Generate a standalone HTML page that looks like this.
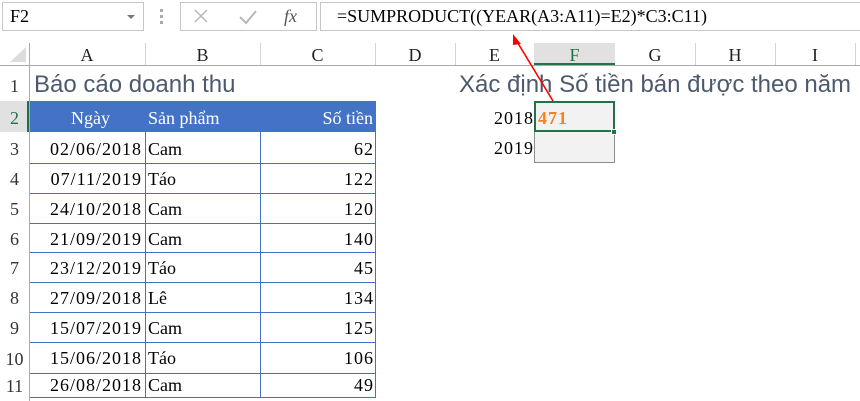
<!DOCTYPE html>
<html><head><meta charset="utf-8">
<style>
*{margin:0;padding:0;box-sizing:border-box}
body{width:860px;height:401px;background:#fff;position:relative;overflow:hidden;font-family:"Liberation Serif",serif;}
.a{position:absolute}
.s{font-family:"Liberation Serif",serif;font-size:18px;color:#000;white-space:nowrap;line-height:20px}
.n{letter-spacing:1px}
.hd{font-family:"Liberation Serif",serif;font-size:18px;color:#222;text-align:center;line-height:20px}
.vl{position:absolute;width:1px;background:#d4d4d4}
.hl{position:absolute;height:1px;background:#d4d4d4}
.bl{position:absolute;background:#4472c4}
.t{font-family:"Liberation Sans","DejaVu Sans",sans-serif;font-size:24px;color:#4d5a6e;white-space:nowrap}
</style></head><body>
<div class="a" style="left:2px;top:2px;width:142px;height:29px;border:1px solid #c6c6c6"></div>
<div class="a s" style="left:10px;top:6px">F2</div>
<div class="a" style="left:127px;top:15px;width:0;height:0;border-left:4px solid transparent;border-right:4px solid transparent;border-top:4px solid #777"></div>
<div class="a" style="left:160px;top:9px;width:3px;height:3px;background:#aaa"></div>
<div class="a" style="left:160px;top:15px;width:3px;height:3px;background:#aaa"></div>
<div class="a" style="left:160px;top:21px;width:3px;height:3px;background:#aaa"></div>
<div class="a" style="left:180px;top:2px;width:137px;height:29px;border:1px solid #c6c6c6"></div>
<svg class="a" style="left:190px;top:6px" width="120" height="22">
<path d="M5 4 L17 16 M17 4 L5 16" stroke="#b8b8b8" stroke-width="1.5"/>
<path d="M50 11 L56 17 L66 5" stroke="#b8b8b8" stroke-width="2" fill="none"/>
<text x="94" y="16" font-family="Liberation Serif" font-style="italic" font-size="18" fill="#555">fx</text>
</svg>
<div class="a" style="left:320px;top:2px;width:545px;height:29px;border:1px solid #c6c6c6"></div>
<div class="a s" style="left:337px;top:6px">=SUMPRODUCT((YEAR(A3:A11)=E2)*C3:C11)</div>

<div class="hl" style="left:0;top:65px;width:860px;background:#ababab"></div>
<div class="vl" style="left:29px;top:43px;height:358px;background:#ababab"></div>
<svg class="a" style="left:10px;top:47px" width="17" height="16"><path d="M16 0 L16 15 L0 15 Z" fill="#dcdcdc"/></svg>
<div class="vl" style="left:145px;top:43px;height:22px"></div>
<div class="vl" style="left:260px;top:43px;height:22px"></div>
<div class="vl" style="left:375px;top:43px;height:22px"></div>
<div class="vl" style="left:455px;top:43px;height:22px"></div>
<div class="vl" style="left:534px;top:43px;height:22px"></div>
<div class="a" style="left:534px;top:43px;width:81px;height:22px;background:#e1e1e1;border-bottom:2px solid #217346"></div>
<div class="vl" style="left:695px;top:43px;height:22px"></div>
<div class="vl" style="left:775px;top:43px;height:22px"></div>
<div class="vl" style="left:855px;top:43px;height:22px"></div>
<div class="a hd" style="left:29px;top:45px;width:116px">A</div>
<div class="a hd" style="left:145px;top:45px;width:115px">B</div>
<div class="a hd" style="left:260px;top:45px;width:115px">C</div>
<div class="a hd" style="left:375px;top:45px;width:80px">D</div>
<div class="a hd" style="left:455px;top:45px;width:79px">E</div>
<div class="a hd" style="left:534px;top:45px;width:81px;color:#217346">F</div>
<div class="a hd" style="left:615px;top:45px;width:80px">G</div>
<div class="a hd" style="left:695px;top:45px;width:80px">H</div>
<div class="a hd" style="left:775px;top:45px;width:80px">I</div>

<div class="a" style="left:0;top:101px;width:29px;height:31px;background:#e1e1e1;border-right:2px solid #217346"></div>
<div class="a hd" style="left:0;top:76px;width:29px;color:#333">1</div>
<div class="a hd" style="left:0;top:108px;width:29px;color:#217346">2</div>
<div class="a hd" style="left:0;top:139px;width:29px;color:#333">3</div>
<div class="a hd" style="left:0;top:169px;width:29px;color:#333">4</div>
<div class="a hd" style="left:0;top:199px;width:29px;color:#333">5</div>
<div class="a hd" style="left:0;top:229px;width:29px;color:#333">6</div>
<div class="a hd" style="left:0;top:258px;width:29px;color:#333">7</div>
<div class="a hd" style="left:0;top:288px;width:29px;color:#333">8</div>
<div class="a hd" style="left:0;top:318px;width:29px;color:#333">9</div>
<div class="a hd" style="left:0;top:349px;width:29px;color:#333">10</div>
<div class="a hd" style="left:0;top:376px;width:29px;color:#333">11</div>

<div class="a t" style="left:34px;top:71px">Báo cáo doanh thu</div>
<div class="a t" style="left:459px;top:71px">Xác định Số tiền bán được theo năm</div>

<div class="a" style="left:30px;top:101px;width:345px;height:31px;background:#4472c4"></div>
<div class="a s" style="left:30px;top:108px;width:80px;text-align:right;color:#fff">Ngày</div>
<div class="a s" style="left:148px;top:108px;color:#fff">Sản phẩm</div>
<div class="a s" style="left:260px;top:108px;width:113px;text-align:right;color:#fff">Số tiền</div>

<div class="bl" style="left:145px;top:132px;width:1px;height:265px"></div>
<div class="bl" style="left:260px;top:132px;width:1px;height:265px"></div>
<div class="bl" style="left:375px;top:101px;width:1px;height:297px"></div>
<div class="bl" style="left:30px;top:163px;width:345px;height:1px"></div>
<div class="bl" style="left:30px;top:193px;width:345px;height:1px"></div>
<div class="bl" style="left:30px;top:223px;width:345px;height:1px"></div>
<div class="bl" style="left:30px;top:252px;width:345px;height:1px"></div>
<div class="bl" style="left:30px;top:282px;width:345px;height:1px"></div>
<div class="bl" style="left:30px;top:312px;width:345px;height:1px"></div>
<div class="bl" style="left:30px;top:342px;width:345px;height:1px"></div>
<div class="bl" style="left:30px;top:373px;width:345px;height:1px"></div>
<div class="bl" style="left:30px;top:397px;width:346px;height:1px"></div>

<div class="a s n" style="left:30px;top:139px;width:112px;text-align:right">02/06/2018</div><div class="a s" style="left:148px;top:139px">Cam</div><div class="a s n" style="left:260px;top:139px;width:114px;text-align:right">62</div>
<div class="a s n" style="left:30px;top:169px;width:112px;text-align:right">07/11/2019</div><div class="a s" style="left:148px;top:169px">Táo</div><div class="a s n" style="left:260px;top:169px;width:114px;text-align:right">122</div>
<div class="a s n" style="left:30px;top:199px;width:112px;text-align:right">24/10/2018</div><div class="a s" style="left:148px;top:199px">Cam</div><div class="a s n" style="left:260px;top:199px;width:114px;text-align:right">120</div>
<div class="a s n" style="left:30px;top:229px;width:112px;text-align:right">21/09/2019</div><div class="a s" style="left:148px;top:229px">Cam</div><div class="a s n" style="left:260px;top:229px;width:114px;text-align:right">140</div>
<div class="a s n" style="left:30px;top:258px;width:112px;text-align:right">23/12/2019</div><div class="a s" style="left:148px;top:258px">Táo</div><div class="a s n" style="left:260px;top:258px;width:114px;text-align:right">45</div>
<div class="a s n" style="left:30px;top:288px;width:112px;text-align:right">27/09/2018</div><div class="a s" style="left:148px;top:288px">Lê</div><div class="a s n" style="left:260px;top:288px;width:114px;text-align:right">134</div>
<div class="a s n" style="left:30px;top:318px;width:112px;text-align:right">15/07/2019</div><div class="a s" style="left:148px;top:318px">Cam</div><div class="a s n" style="left:260px;top:318px;width:114px;text-align:right">125</div>
<div class="a s n" style="left:30px;top:348px;width:112px;text-align:right">15/06/2018</div><div class="a s" style="left:148px;top:348px">Táo</div><div class="a s n" style="left:260px;top:348px;width:114px;text-align:right">106</div>
<div class="a s n" style="left:30px;top:375px;width:112px;text-align:right">26/08/2018</div><div class="a s" style="left:148px;top:375px">Cam</div><div class="a s n" style="left:260px;top:375px;width:114px;text-align:right">49</div>

<div class="a s n" style="left:455px;top:108px;width:79px;text-align:right">2018</div>
<div class="a s n" style="left:455px;top:138px;width:79px;text-align:right">2019</div>
<div class="a" style="left:534px;top:101px;width:81px;height:62px;background:#f2f2f2;border:1px solid #8c8c8c"></div>
<div class="a" style="left:534px;top:101px;width:81px;height:31px;border:2px solid #217346"></div>
<div class="a" style="left:611px;top:129px;width:6px;height:6px;background:#217346;border:1px solid #fff"></div>
<div class="a s n" style="left:538px;top:108px;color:#f58220;font-weight:bold">471</div>

<svg class="a" style="left:0;top:0" width="860" height="401">
<line x1="553" y1="101" x2="516" y2="40" stroke="#f00" stroke-width="1.6"/>
<path d="M513 34 L521 44 L513 45 Z" fill="#f00"/>
</svg>
</body></html>
